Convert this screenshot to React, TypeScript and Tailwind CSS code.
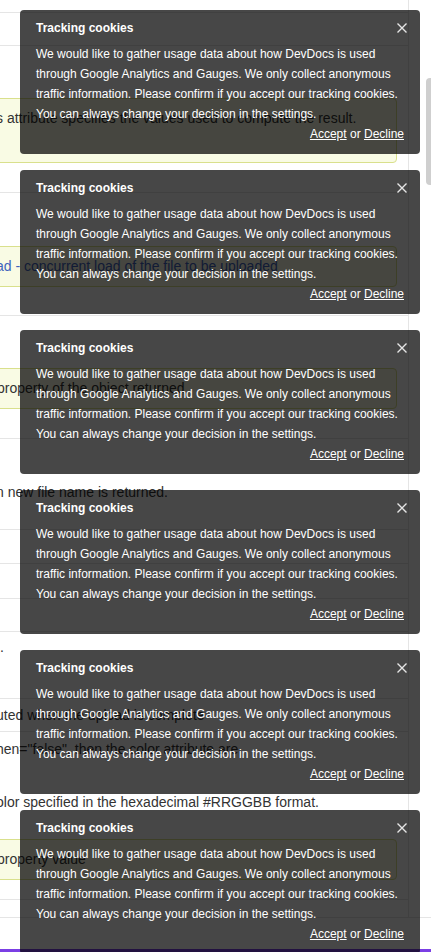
import React from "react";

const notices = [0, 1, 2, 3, 4, 5];

function Notice({ top }: { top: number }) {
  return (
    <div
      className="absolute left-[20px] w-[400px] rounded bg-black/[0.72] px-4 pt-[8px] pb-[10px] text-[12px] text-white"
      style={{ top }}
    >
      <div className="leading-[20px] font-bold">Tracking cookies</div>
      <button className="absolute top-[13px] right-[13px] h-[10px] w-[10px]">
        <svg viewBox="0 0 10 10" className="block h-[10px] w-[10px]">
          <path d="M0.5 0.5 L9.5 9.5 M9.5 0.5 L0.5 9.5" stroke="#e6e6e6" strokeWidth="1.4" fill="none" />
        </svg>
      </button>
      <p className="mt-[6px] leading-[20px]">
        We would like to gather usage data about how DevDocs is used through Google Analytics and Gauges. We only
        collect anonymous traffic information. Please confirm if you accept our tracking cookies. You can always
        change your decision in the settings.
      </p>
      <div className="text-right leading-[20px]">
        <a className="underline">Accept</a> or <a className="underline">Decline</a>
      </div>
    </div>
  );
}

function Row({ h, children, line = true }: { h: string; children?: React.ReactNode; line?: boolean }) {
  return (
    <div className={`${h} ${line ? "border-b border-[#e5e5e5]" : ""} flex items-center overflow-hidden whitespace-nowrap`}>
      {children}
    </div>
  );
}

function Note({ h, children }: { h: string; children: React.ReactNode }) {
  return (
    <div className={`${h} w-[399px] -ml-[2px] border border-[#d9e08c] bg-[#f9fbe4] flex items-center overflow-hidden whitespace-nowrap rounded-r-sm`}>
      {children}
    </div>
  );
}

export default function App() {
  return (
    <div className="relative h-[952px] w-[431px] overflow-hidden bg-white text-[14px] text-[#333] font-['Liberation_Sans',Arial,sans-serif]">
      <div className="flex h-[918px] border-b border-[#e5e5e5]">
        <div className="w-[409px] border-r border-[#e5e5e5] overflow-hidden">
          <Row h="h-[13px]" />
          <Row h="h-[33px]" />
          <div className="h-[52px]" />
          <Note h="h-[65px]">
            <span className="-ml-[3px] -mt-[25px]">s attribute specifies the values used to compute the result.</span>
          </Note>
          <Row h="h-[30px]" />
          <div className="h-[53px]" />
          <Note h="h-[41px]">
            <span className="-ml-[3px] text-[#4163bd]">ad - concurrent load of the file to be uploaded</span>
          </Note>
          <Row h="h-[29px]" />
          <div className="h-[52px]" />
          <Note h="h-[41px]">
            <span className="-ml-[2px]">property of the object returned</span>
          </Note>
          <Row h="h-[30px]" />
          <div className="h-[63px] flex items-end whitespace-nowrap">
            <span className="-ml-[4px] leading-[20px]">n new file name is returned.</span>
          </div>
          <Row h="h-[28px]" />
          <Row h="h-[34px]" />
          <Row h="h-[35px]" />
          <Row h="h-[33px]" />
          <Row h="h-[67px]">
            <span className="-mt-[35px]">.</span>
          </Row>
          <Row h="h-[33px]">
            <span className="-ml-[4px]">uted when the upload is complete</span>
          </Row>
          <div className="h-[55px] flex items-start whitespace-nowrap overflow-hidden">
            <span className="-ml-[4px] mt-[7px]">hen=&quot;false&quot;, then the color attribute are</span>
          </div>
          <div className="h-[43px] flex items-start whitespace-nowrap">
            <span className="-ml-[4px] mt-[5px]">olor specified in the hexadecimal #RRGGBB format.</span>
          </div>
          <div className="h-[9px]" />
          <Note h="h-[41px]">
            <span className="-ml-[2px]">property value</span>
          </Note>
          <Row h="h-[20px]" />
        </div>
        <div className="flex-1 flex justify-end pt-[78px]">
          <div className="h-[107px] w-[5px] rounded-l-sm bg-[#cfcfcf]" />
        </div>
      </div>
      <div className="h-[31px]" />
      <div className="h-[3px] bg-[#7b3fe4]" />

      {notices.map((i) => (
        <Notice key={i} top={10 + 160 * i} />
      ))}
    </div>
  );
}
